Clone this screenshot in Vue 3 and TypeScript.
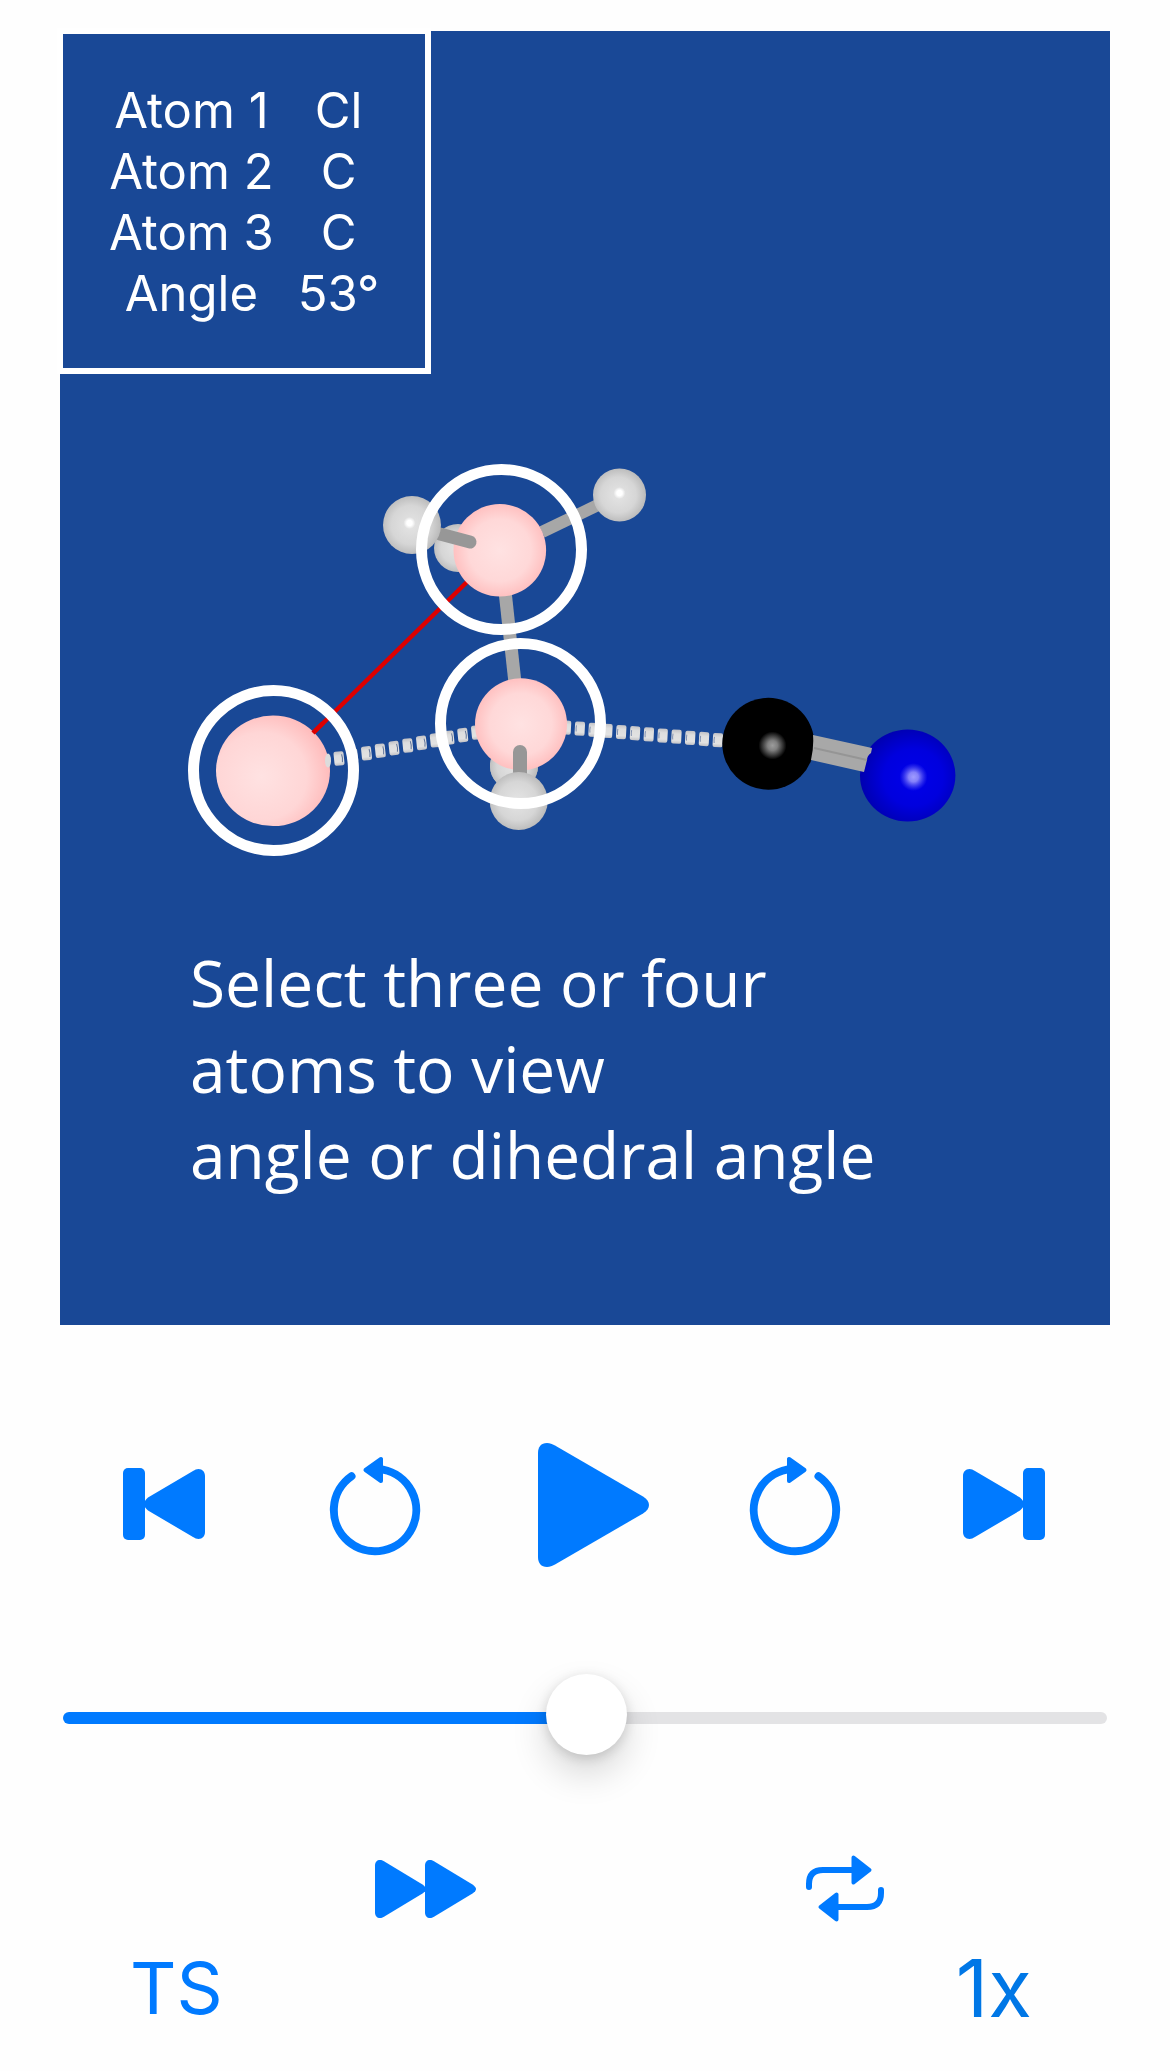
<script setup lang="ts">
import { computed, ref } from 'vue'

interface Sphere {
  x: number
  y: number
  rx: number
  ry: number
  fill: string
}

interface Dash {
  x: number
  y: number
}

const measurements = [
  { label: 'Atom 1', value: 'Cl' },
  { label: 'Atom 2', value: 'C' },
  { label: 'Atom 3', value: 'C' },
  { label: 'Angle', value: '53°' },
]

const backSpheres: Sphere[] = [
  { x: 398, y: 517, rx: 24, ry: 24, fill: 'url(#hydrogen)' },
  { x: 454, y: 735, rx: 24, ry: 24, fill: 'url(#hydrogen)' },
  { x: 559.5, y: 464, rx: 26.5, ry: 26.5, fill: 'url(#hydrogen)' },
  { x: 439.8, y: 519.3, rx: 46.3, ry: 46.3, fill: 'url(#selected)' },
  { x: 213, y: 739.8, rx: 57, ry: 55.3, fill: 'url(#selected-large)' },
  { x: 708.3, y: 712.8, rx: 46, ry: 46, fill: '#000' },
  { x: 847.7, y: 744.5, rx: 47.7, ry: 46, fill: 'url(#nitrogen)' },
]

const rings = [
  { x: 441.5, y: 518.5 },
  { x: 460.5, y: 692.5 },
  { x: 213.5, y: 739.5 },
]

const chain = (x: number, y: number, dx: number, dy: number, count: number): Dash[] =>
  Array.from({ length: count }, (_, i) => ({ x: x + dx * i, y: y + dy * i }))

const leavingBond = chain(279, 727.5, 13.75, -2.6, 11)
const formingBond = chain(506, 696.5, 13.8, 1.15, 12)

const frame = ref(50.2)
const filled = computed(() => ({ '--filled': `${frame.value}%` }))
</script>

<template>
  <main class="viewer">
    <section class="stage">
      <table class="readout">
        <tbody>
          <tr v-for="row in measurements" :key="row.label">
            <th scope="row">{{ row.label }}</th>
            <td>{{ row.value }}</td>
          </tr>
        </tbody>
      </table>

      <svg class="molecule" viewBox="0 0 1050 909" role="img" aria-label="Transition state model">
        <defs>
          <radialGradient id="hydrogen" cx="0.48" cy="0.5" r="0.56">
            <stop offset="0" stop-color="#e4e4e4" />
            <stop offset="0.6" stop-color="#d6d6d6" />
            <stop offset="1" stop-color="#b4b4b4" />
          </radialGradient>
          <radialGradient id="selected" cx="0.5" cy="0.5" r="0.56">
            <stop offset="0" stop-color="#ffe2e2" />
            <stop offset="0.6" stop-color="#ffd8d8" />
            <stop offset="1" stop-color="#ffb8b8" />
          </radialGradient>
          <radialGradient id="selected-large" cx="0.4" cy="0.55" r="0.66">
            <stop offset="0" stop-color="#ffe2e2" />
            <stop offset="0.6" stop-color="#ffd6d6" />
            <stop offset="1" stop-color="#ffb4b4" />
          </radialGradient>
          <radialGradient id="nitrogen" cx="0.56" cy="0.52" r="0.62">
            <stop offset="0" stop-color="#0000ea" />
            <stop offset="0.5" stop-color="#0000de" />
            <stop offset="1" stop-color="#0000a4" />
          </radialGradient>
          <radialGradient id="shine-carbon">
            <stop offset="0" stop-color="#9c9c9c" />
            <stop offset="0.35" stop-color="#808080" />
            <stop offset="1" stop-color="#808080" stop-opacity="0" />
          </radialGradient>
          <radialGradient id="shine-nitrogen">
            <stop offset="0" stop-color="#a09cff" />
            <stop offset="0.35" stop-color="#8480fa" />
            <stop offset="1" stop-color="#5050f0" stop-opacity="0" />
          </radialGradient>
          <radialGradient id="shine-hydrogen">
            <stop offset="0" stop-color="#fff" />
            <stop offset="0.45" stop-color="#fff" />
            <stop offset="1" stop-color="#fff" stop-opacity="0" />
          </radialGradient>
          <linearGradient id="dash" x1="0" y1="0" x2="0" y2="1">
            <stop offset="0" stop-color="#c2c2c6" />
            <stop offset="0.3" stop-color="#dedede" />
            <stop offset="0.75" stop-color="#e2e2e2" />
            <stop offset="1" stop-color="#c2c2c6" />
          </linearGradient>
        </defs>

        <g v-for="(d, i) in formingBond" :key="`f${i}`" :transform="`translate(${d.x} ${d.y}) rotate(3)`">
          <rect x="-5" y="-7" width="10" height="14" rx="2" fill="url(#dash)" />
          <path d="M-3.500 -3Q-4 0 -3.500 3" fill="none" stroke="#8090b0" />
        </g>
        <path d="M482 501L540 473" stroke="#a7a7a7" stroke-width="12" />
        <path d="M445 560L455 652" stroke="#a7a7a7" stroke-width="13" />
        <path d="M410 548L253 702" stroke="#dd0000" stroke-width="4.500" />

        <ellipse
          v-for="(s, i) in backSpheres"
          :key="`s${i}`"
          :cx="s.x"
          :cy="s.y"
          :rx="s.rx"
          :ry="s.ry"
          :fill="s.fill"
        />
        <path d="M263 692L253 702" stroke="#dd0000" stroke-width="4.500" />

        <ellipse cx="268" cy="729.500" rx="3" ry="7" fill="#dcdcdc" />
        <g v-for="(d, i) in leavingBond" :key="`l${i}`" :transform="`translate(${d.x} ${d.y}) rotate(-6)`">
          <rect x="-5" y="-7" width="10" height="14" rx="2" fill="url(#dash)" />
          <path d="M3 -4Q4 0 3 4" fill="none" stroke="#5f7398" />
        </g>
        <circle cx="454" cy="735" r="24" fill="url(#hydrogen)" />
        <circle cx="461" cy="693.200" r="46" fill="url(#selected)" />

        <path d="M380 503L410 511" stroke="#979797" stroke-width="13" stroke-linecap="round" />
        <circle cx="352" cy="494" r="29" fill="url(#hydrogen)" />
        <path d="M460 721V750" stroke="#979797" stroke-width="14" stroke-linecap="round" />
        <circle cx="458.700" cy="770" r="29" fill="url(#hydrogen)" />

        <path d="M753 704L812 717L811 722Q807 725 807 729L804 741L751 729Q754 716 753 704Z" fill="#a8a8a8" />
        <path d="M754 717L807 729" stroke="#959595" stroke-width="2" />

        <circle cx="349.500" cy="492" r="6" fill="url(#shine-hydrogen)" />
        <circle cx="559.500" cy="462" r="6" fill="url(#shine-hydrogen)" />
        <circle cx="712.500" cy="714.500" r="14" fill="url(#shine-carbon)" />
        <circle cx="853.500" cy="746" r="14" fill="url(#shine-nitrogen)" />

        <circle
          v-for="(r, i) in rings"
          :key="`r${i}`"
          :cx="r.x"
          :cy="r.y"
          r="80"
          fill="none"
          stroke="#fff"
          stroke-width="11"
        />
      </svg>

      <p class="caption">Select three or four<br />atoms to view<br />angle or dihedral angle</p>
    </section>

    <nav class="transport" aria-label="Playback">
      <button type="button" aria-label="Go to start">
        <svg width="84" height="74" viewBox="0 0 84 74">
          <rect width="22" height="72" rx="5" />
          <path d="M82 8C82 4 79.500 1 75.500 1C73.500 1 72 1.800 70 3L25 29.500Q21 33 21 36Q21 39 25 42.500L70 69C72 70.200 73.500 71 75.500 71C79.500 71 82 68 82 64Z" />
        </svg>
      </button>
      <button type="button" aria-label="Step back">
        <svg width="90" height="96" viewBox="0 0 90 96">
          <path class="line" d="M53 12.600A41.200 41.200 0 1 1 21.500 19.200" />
          <path class="head" d="M35.500 13L51 2V24Z" />
        </svg>
      </button>
      <button type="button" aria-label="Play">
        <svg width="128" height="124" viewBox="0 0 128 124">
          <path d="M17 10C17 4 20 0 26 0C29 0 31 1 34 2.500L122 53.500C130 58.500 130 65.500 122 70.500L34 121.500C31 123 29 124 26 124C20 124 17 120 17 114Z" />
        </svg>
      </button>
      <button type="button" aria-label="Step forward">
        <svg width="90" height="96" viewBox="0 0 90 96">
          <path class="line" d="M37 12.600A41.200 41.200 0 1 0 68.500 19.200" />
          <path class="head" d="M54.500 13L39 2V24Z" />
        </svg>
      </button>
      <button type="button" aria-label="Go to end">
        <svg width="84" height="74" viewBox="0 0 84 74">
          <rect x="60" width="22" height="72" rx="5" />
          <path d="M0 8C0 4 2.500 1 6.500 1C8.500 1 10 1.800 12 3L57 29.500Q61 33 61 36Q61 39 57 42.500L12 69C10 70.200 8.500 71 6.500 71C2.500 71 0 68 0 64Z" />
        </svg>
      </button>
    </nav>

    <input
      v-model.number="frame"
      class="scrubber"
      type="range"
      min="0"
      max="100"
      step="0.1"
      aria-label="Reaction progress"
      :style="filled"
    />

    <div class="modes">
      <button type="button" aria-label="Fast forward">
        <svg width="101" height="58" viewBox="0 0 101 58">
          <path
            v-for="x in [0, 50]"
            :key="x"
            :transform="`translate(${x} 0)`"
            d="M0 5.500C0 2 2 0 5 0C6.500 0 7.500 0.500 9 1.300L47.500 24.500Q51 27 51 29Q51 31 47.500 33.500L9 56.700C7.500 57.500 6.500 58 5 58C2 58 0 56 0 52.500Z"
          />
        </svg>
      </button>
      <button type="button" aria-label="Repeat">
        <svg width="78" height="67" viewBox="0 0 78 67">
          <g v-for="turn in [0, 180]" :key="turn" :transform="`rotate(${turn} 39 33.500)`">
            <path class="loop-line" d="M3 32V29Q3 15 17 15H48" />
            <path class="loop-head" d="M47.500 2.500L63.500 15L47.500 27.500Z" />
          </g>
        </svg>
      </button>
    </div>

    <div class="labels">
      <button type="button" class="state">TS</button>
      <button type="button" class="speed">1x</button>
    </div>
  </main>
</template>

<style>
body {
  margin: 0;
  background: #fefefe;
}
</style>

<style scoped>
.viewer {
  padding: 31px 60px 38px;
  font-family: Inter, 'Liberation Sans', sans-serif;
}

.stage {
  position: relative;
  padding-bottom: 127px;
  background: #194896;
  color: #fff;
}

.readout {
  position: absolute;
  top: -3px;
  left: -3px;
  padding: 46px 34px 44px;
  border: 6px solid #fff;
  border-collapse: separate;
  border-spacing: 0;
  background: #194896;
  font-size: 49px;
  line-height: 61px;
  text-align: center;
  white-space: nowrap;
}

.readout th,
.readout td {
  padding: 0 12px;
  font-weight: 400;
}

.molecule {
  display: block;
  width: 100%;
}

.caption {
  margin: 0;
  padding-left: 130px;
  font-family: 'Open Sans', 'Noto Sans', sans-serif;
  font-size: 64px;
  line-height: 86px;
}

button {
  display: block;
  margin: 0;
  padding: 0;
  border: 0;
  background: none;
  color: #007aff;
  font: inherit;
  cursor: pointer;
}

button svg {
  display: block;
  overflow: visible;
  fill: currentColor;
}

.line,
.loop-line {
  fill: none;
  stroke: currentColor;
  stroke-width: 8;
}

.line {
  stroke-linecap: round;
}

.loop-line {
  stroke-width: 6;
  stroke-linecap: round;
}

.head,
.loop-head {
  stroke: currentColor;
  stroke-width: 4;
  stroke-linejoin: round;
}

.transport {
  display: grid;
  grid-template-columns: repeat(5, 1fr);
  place-items: center;
  margin-top: 118px;
}

.scrubber {
  display: block;
  box-sizing: border-box;
  width: calc(100% - 6px);
  height: 82px;
  margin: 110px 3px 0;
  appearance: none;
  background: none;
}

.scrubber::-webkit-slider-runnable-track {
  height: 12px;
  border-radius: 6px;
  background: linear-gradient(to right, #007aff var(--filled), #e3e3e5 var(--filled));
}

.scrubber::-webkit-slider-thumb {
  width: 81px;
  height: 81px;
  margin-top: -38px;
  appearance: none;
  border-radius: 50%;
  background: #fff;
  box-shadow: 0 18px 36px rgb(0 0 0 / 16%), 0 3px 12px rgb(0 0 0 / 14%);
}

.modes {
  display: flex;
  align-items: center;
  justify-content: space-between;
  margin-top: 96px;
  padding: 0 226px 0 315px;
}

.labels {
  display: flex;
  align-items: center;
  justify-content: space-between;
  margin-top: 22px;
  padding: 0 78px 0 70px;
  line-height: 88px;
}

.state {
  font-size: 72px;
}

.speed {
  color: #0077e6;
  font-size: 80px;
}
</style>
